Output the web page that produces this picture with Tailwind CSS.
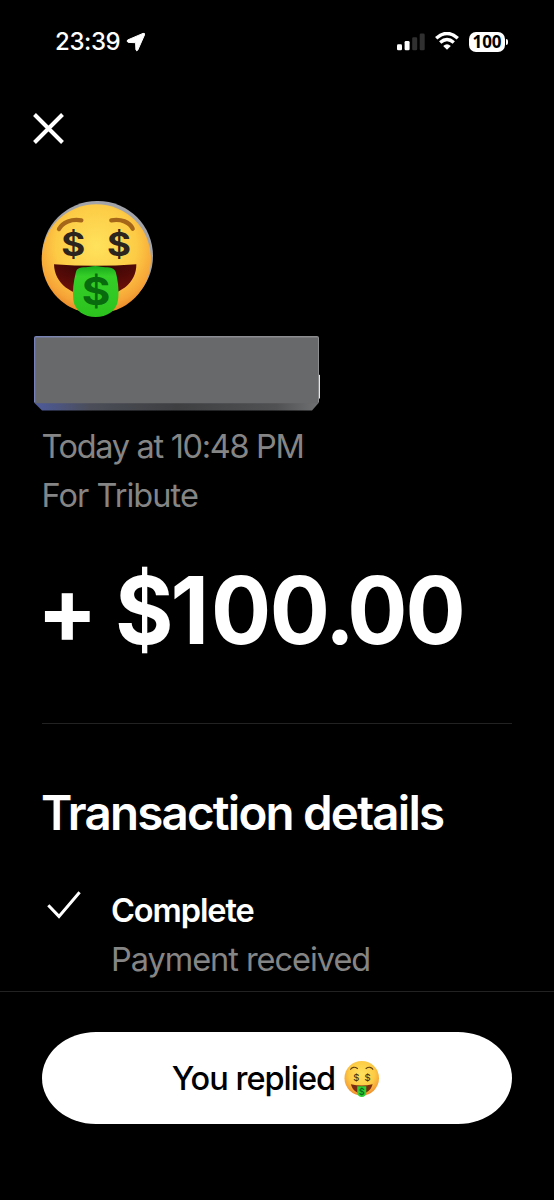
<!DOCTYPE html>
<html lang="en">
<head>
<meta charset="utf-8">
<title>Transaction details</title>
<script src="https://cdn.jsdelivr.net/npm/@tailwindcss/browser@4"></script>
</head>
<body class="bg-black">
<svg width="0" height="0" class="absolute" aria-hidden="true">
  <defs>
    <radialGradient id="face" cx="50%" cy="38%" r="62%"><stop offset="0" stop-color="#ffe25c"/><stop offset=".6" stop-color="#fdcb45"/><stop offset=".88" stop-color="#f6a437"/><stop offset="1" stop-color="#e98a2b"/></radialGradient>
    <linearGradient id="tongue" x1="0" y1="0" x2="0" y2="1"><stop offset="0" stop-color="#18a81c"/><stop offset=".2" stop-color="#35cf28"/><stop offset="1" stop-color="#2cc21e"/></linearGradient>
    <radialGradient id="mouth" cx="50%" cy="0%" r="75%"><stop offset="0" stop-color="#2e0505"/><stop offset="1" stop-color="#650d08"/></radialGradient>
    <symbol id="money" viewBox="30 27 345 360">
      <ellipse cx="199" cy="207" rx="164" ry="164" fill="url(#face)"/>
      <path d="M87 117C98 96 125 86 154 91" fill="none" stroke="#a5661a" stroke-width="13" stroke-linecap="round"/>
      <path d="M244 91C273 86 299 96 308 116" fill="none" stroke="#a5661a" stroke-width="13" stroke-linecap="round"/>
      <path d="M72 223Q196 232 319 223C320 280 268 319 196 319C124 319 73 280 72 223Z" fill="url(#mouth)"/>
      <path d="M138 245C142 228 165 233 180 230C190 227 202 227 213 230C229 233 250 228 257 245C266 280 267 310 264 330C260 363 230 381 197 381C164 381 134 363 130 330C127 305 130 275 138 245Z" fill="url(#tongue)"/>
      <g font-family="Inter, sans-serif" font-weight="700" text-anchor="middle">
        <text x="130" y="197" font-size="99" textLength="72" lengthAdjust="spacingAndGlyphs" fill="#2b241f">$</text>
        <text x="267" y="197" font-size="99" textLength="72" lengthAdjust="spacingAndGlyphs" fill="#2b241f">$</text>
        <text x="198" y="344" font-size="115" textLength="86" lengthAdjust="spacingAndGlyphs" fill="#086b0e">$</text>
      </g>
    </symbol>
    <symbol id="money-small" viewBox="30 27 345 360">
      <ellipse cx="200" cy="204" rx="168" ry="168" fill="url(#face)"/>
      <path d="M92 118C104 94 134 92 158 110M242 110C266 92 296 94 308 118" fill="none" stroke="#5d3c12" stroke-width="11" stroke-linecap="round"/>
      <path d="M94 262Q200 290 306 262C290 320 250 350 200 350C150 350 110 320 94 262Z" fill="#7a2c10"/>
      <path d="M156 282H244V335Q240 387 200 387Q160 387 156 335Z" fill="#32cf35"/>
      <g font-family="Inter, sans-serif" font-weight="500" text-anchor="middle">
        <text x="146" y="231" font-size="92" fill="#4b3510">$</text>
        <text x="256" y="231" font-size="92" fill="#4b3510">$</text>
        <text x="200" y="366" font-size="84" font-weight="600" fill="#0d6b20">$</text>
      </g>
    </symbol>
  </defs>
</svg>
<main class="flex h-[1200px] w-[554px] flex-col overflow-hidden bg-black font-['Inter',sans-serif] text-white">
  <header class="flex h-[82px] items-center justify-between pt-px pr-[46px] pl-[55px]">
    <div class="flex items-center gap-[6px]">
      <span class="text-[24px] font-medium tracking-[-0.4px]">23:39</span>
      <svg class="h-5 w-5" viewBox="0 0 20 20"><path d="M1.6 8 17 1.4Q19.2 .8 18.5 2.9L11.8 18Q10.6 19.8 9.9 17.8L9.6 10.7 2.3 10.4Q.2 9.3 1.6 8Z" fill="white" stroke="white" stroke-width="1" stroke-linejoin="round"/></svg>
    </div>
    <div class="flex items-center">
      <svg class="h-[18px] w-7" viewBox="0 0 28 18"><rect x="0" y="11.2" width="5" height="6" rx="1.3" fill="white"/><rect x="7.6" y="7.9" width="5" height="9.3" rx="1.3" fill="white"/><rect x="15.2" y="4.2" width="5" height="13" rx="1.3" fill="#303030"/><rect x="22.7" y=".6" width="5" height="16.6" rx="1.3" fill="#303030"/></svg>
      <svg class="ml-[10px] h-[19px] w-6" viewBox="0 0 24 19" fill="none" stroke="white" stroke-width="3.4"><path d="M1.2 6.3Q12-3.4 22.8 6.3"/><path d="M5.2 10.5Q12 4.5 18.8 10.5"/><path d="M8.2 13.9Q12 10.6 15.8 13.9L12 17.8Z" fill="white" stroke="none"/></svg>
      <div class="ml-[10px] flex h-5 w-9 items-center justify-center rounded-[7px] bg-white font-['Open_Sans',sans-serif] text-[17px] leading-5 font-bold text-black">100</div>
      <div class="ml-px h-[6px] w-[2px] rounded-r-full bg-white"></div>
    </div>
  </header>
  <div class="h-[117px] pt-[31px] pl-[33px]">
    <svg class="h-[31px] w-[31px]" viewBox="0 0 31 31"><path d="M1.5 1.5 29.5 29.5M29.5 1.5 1.5 29.5" stroke="white" stroke-width="4"/></svg>
  </div>
  <div class="relative ml-10 h-[120px] w-[115px]">
    <div class="absolute top-[1.7px] left-[2px] h-[110px] w-[110.5px] rounded-full bg-[#a2a4aa]"></div>
    <svg class="relative h-[120px] w-[115px]"><use href="#money"/></svg>
  </div>
  <svg class="mt-[16px] ml-[33px] h-[77px] w-[289px] shrink-0" viewBox="0 0 289 77">
    <defs><linearGradient id="edge"><stop offset="0" stop-color="#4d5b9c"/><stop offset=".2" stop-color="#4b4d58"/><stop offset=".5" stop-color="#3d3f41"/><stop offset=".85" stop-color="#505153"/><stop offset="1" stop-color="#707173"/></linearGradient>
    <linearGradient id="rim"><stop offset="0" stop-color="#7581b8"/><stop offset=".2" stop-color="#8b8d9a"/><stop offset="1" stop-color="#8c8d8f"/></linearGradient></defs>
    <path d="M284 39 287 40V63L284 66Z" fill="#e6e6e6"/>
    <path d="M1 67.5H286L279 75.5H9Z" fill="url(#edge)"/>
    <path d="M1 3Q1 1 3 1H284Q286 1 286 3V67.5H1Z" fill="url(#rim)"/>
    <path d="M2.2 2.6H285V68.3H2.2Z" fill="#68696b"/>
  </svg>
  <section class="flex flex-col pt-[10px] pl-[41.5px] text-[32.5px] leading-[49px] whitespace-nowrap text-[#858585]">
    <p class="tracking-[-1.32px]">Today at 10:48 PM</p>
    <p class="tracking-[-0.95px]">For Tribute</p>
  </section>
  <div class="flex h-[203px] items-center pb-[23px] pl-[37px]">
    <p class="origin-left scale-x-[0.96] text-[93px] leading-none font-bold whitespace-nowrap"><span class="mr-[-4px]">+</span> <span class="tracking-[-3px]">$</span><span class="tracking-[2px]">1</span><span class="tracking-[-1.5px]">0</span><span class="tracking-[-5px]">0</span><span class="tracking-[-8px]">.</span><span class="tracking-[-2px]">00</span></p>
  </div>
  <hr class="mr-[42px] ml-[42px] border-[#222]">
  <h1 class="mt-[63px] ml-[41px] text-[47.5px] leading-[51px] font-semibold tracking-[-1.8px] whitespace-nowrap">Transaction details</h1>
  <div class="mt-[48px] flex h-[105px] pl-[47px]">
    <svg class="mt-[5px] h-[28px] w-[34px]" viewBox="0 0 34 28"><path d="M1.3 14.2 12 25.4 32.6 1.3" fill="none" stroke="white" stroke-width="3"/></svg>
    <div class="pl-[30px] text-[32.5px] leading-[49px] whitespace-nowrap">
      <p class="font-semibold tracking-[-1.1px]">Complete</p>
      <p class="tracking-[-1.03px] text-[#858585]">Payment received</p>
    </div>
  </div>
  <footer class="flex-1 border-t border-[#222] px-[42px] pt-[40px]">
    <button class="flex h-[92px] w-full items-center justify-center rounded-[54px/46px] bg-white pt-[3px] pr-[2px] text-[32.5px] font-medium tracking-[-1px] text-black">
      <span class="whitespace-nowrap">You replied</span>
      <svg class="mb-[3px] ml-[9px] h-[37px] w-[36px]"><use href="#money-small"/></svg>
    </button>
  </footer>
</main>
</body>
</html>
